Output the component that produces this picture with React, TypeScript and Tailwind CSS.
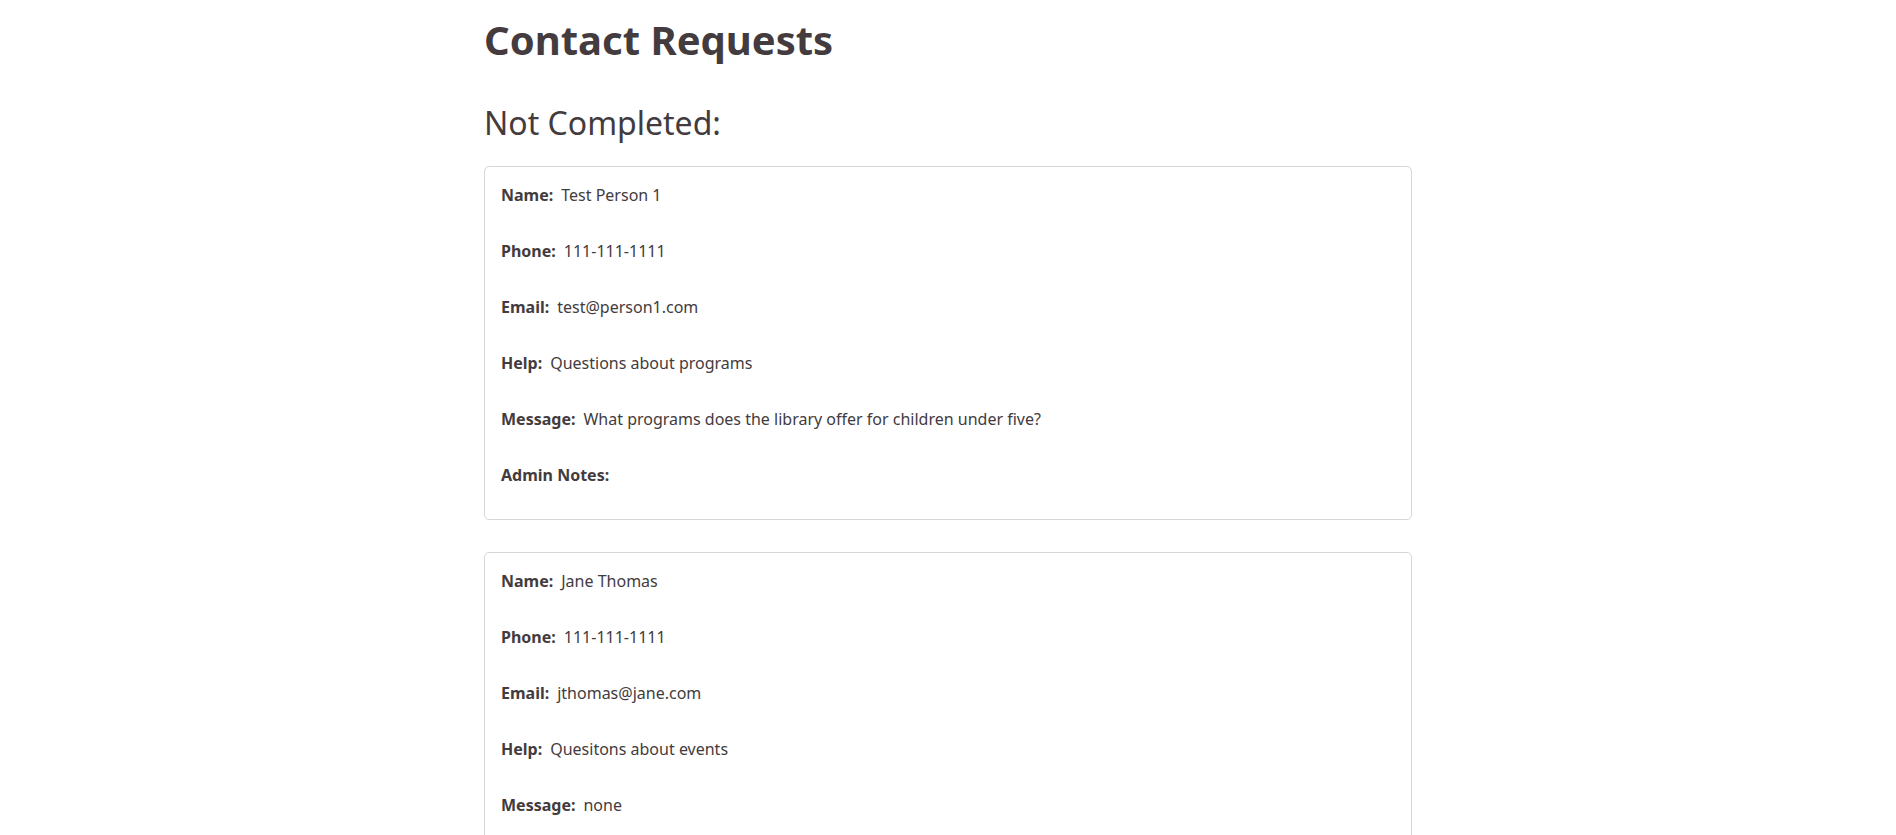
const requests = [
  {
    name: "Test Person 1",
    phone: "111-111-1111",
    email: "test@person1.com",
    help: "Questions about programs",
    message: "What programs does the library offer for children under five?",
    notes: "",
  },
  {
    name: "Jane Thomas",
    phone: "111-111-1111",
    email: "jthomas@jane.com",
    help: "Quesitons about events",
    message: "none",
    notes: "",
  },
];

function Row({ label, value }: { label: string; value: string }) {
  return (
    <p className="leading-6">
      <span className="font-bold">{label}:</span>
      <span className="ml-2">{value}</span>
    </p>
  );
}

export default function App() {
  return (
    <div className="min-h-screen bg-white text-[#433b3e] font-['Noto_Sans',sans-serif]">
      <div className="w-[928px] mx-auto pt-[16px]">
        <h1 className="text-[40px] font-bold leading-[1.2]">Contact Requests</h1>
        <h2 className="text-[32px] leading-[1.2] mt-[40px] mb-[24px]">Not Completed:</h2>

        <div className="flex flex-col gap-[32px] pb-10">
          {requests.map((r, i) => (
            <div
              key={i}
              className="border border-[#d6d6d6] rounded-[5px] px-4 pt-4 pb-[32px] flex flex-col gap-8 text-base"
            >
              <Row label="Name" value={r.name} />
              <Row label="Phone" value={r.phone} />
              <Row label="Email" value={r.email} />
              <Row label="Help" value={r.help} />
              <Row label="Message" value={r.message} />
              <Row label="Admin Notes" value={r.notes} />
            </div>
          ))}
        </div>
      </div>
    </div>
  );
}
